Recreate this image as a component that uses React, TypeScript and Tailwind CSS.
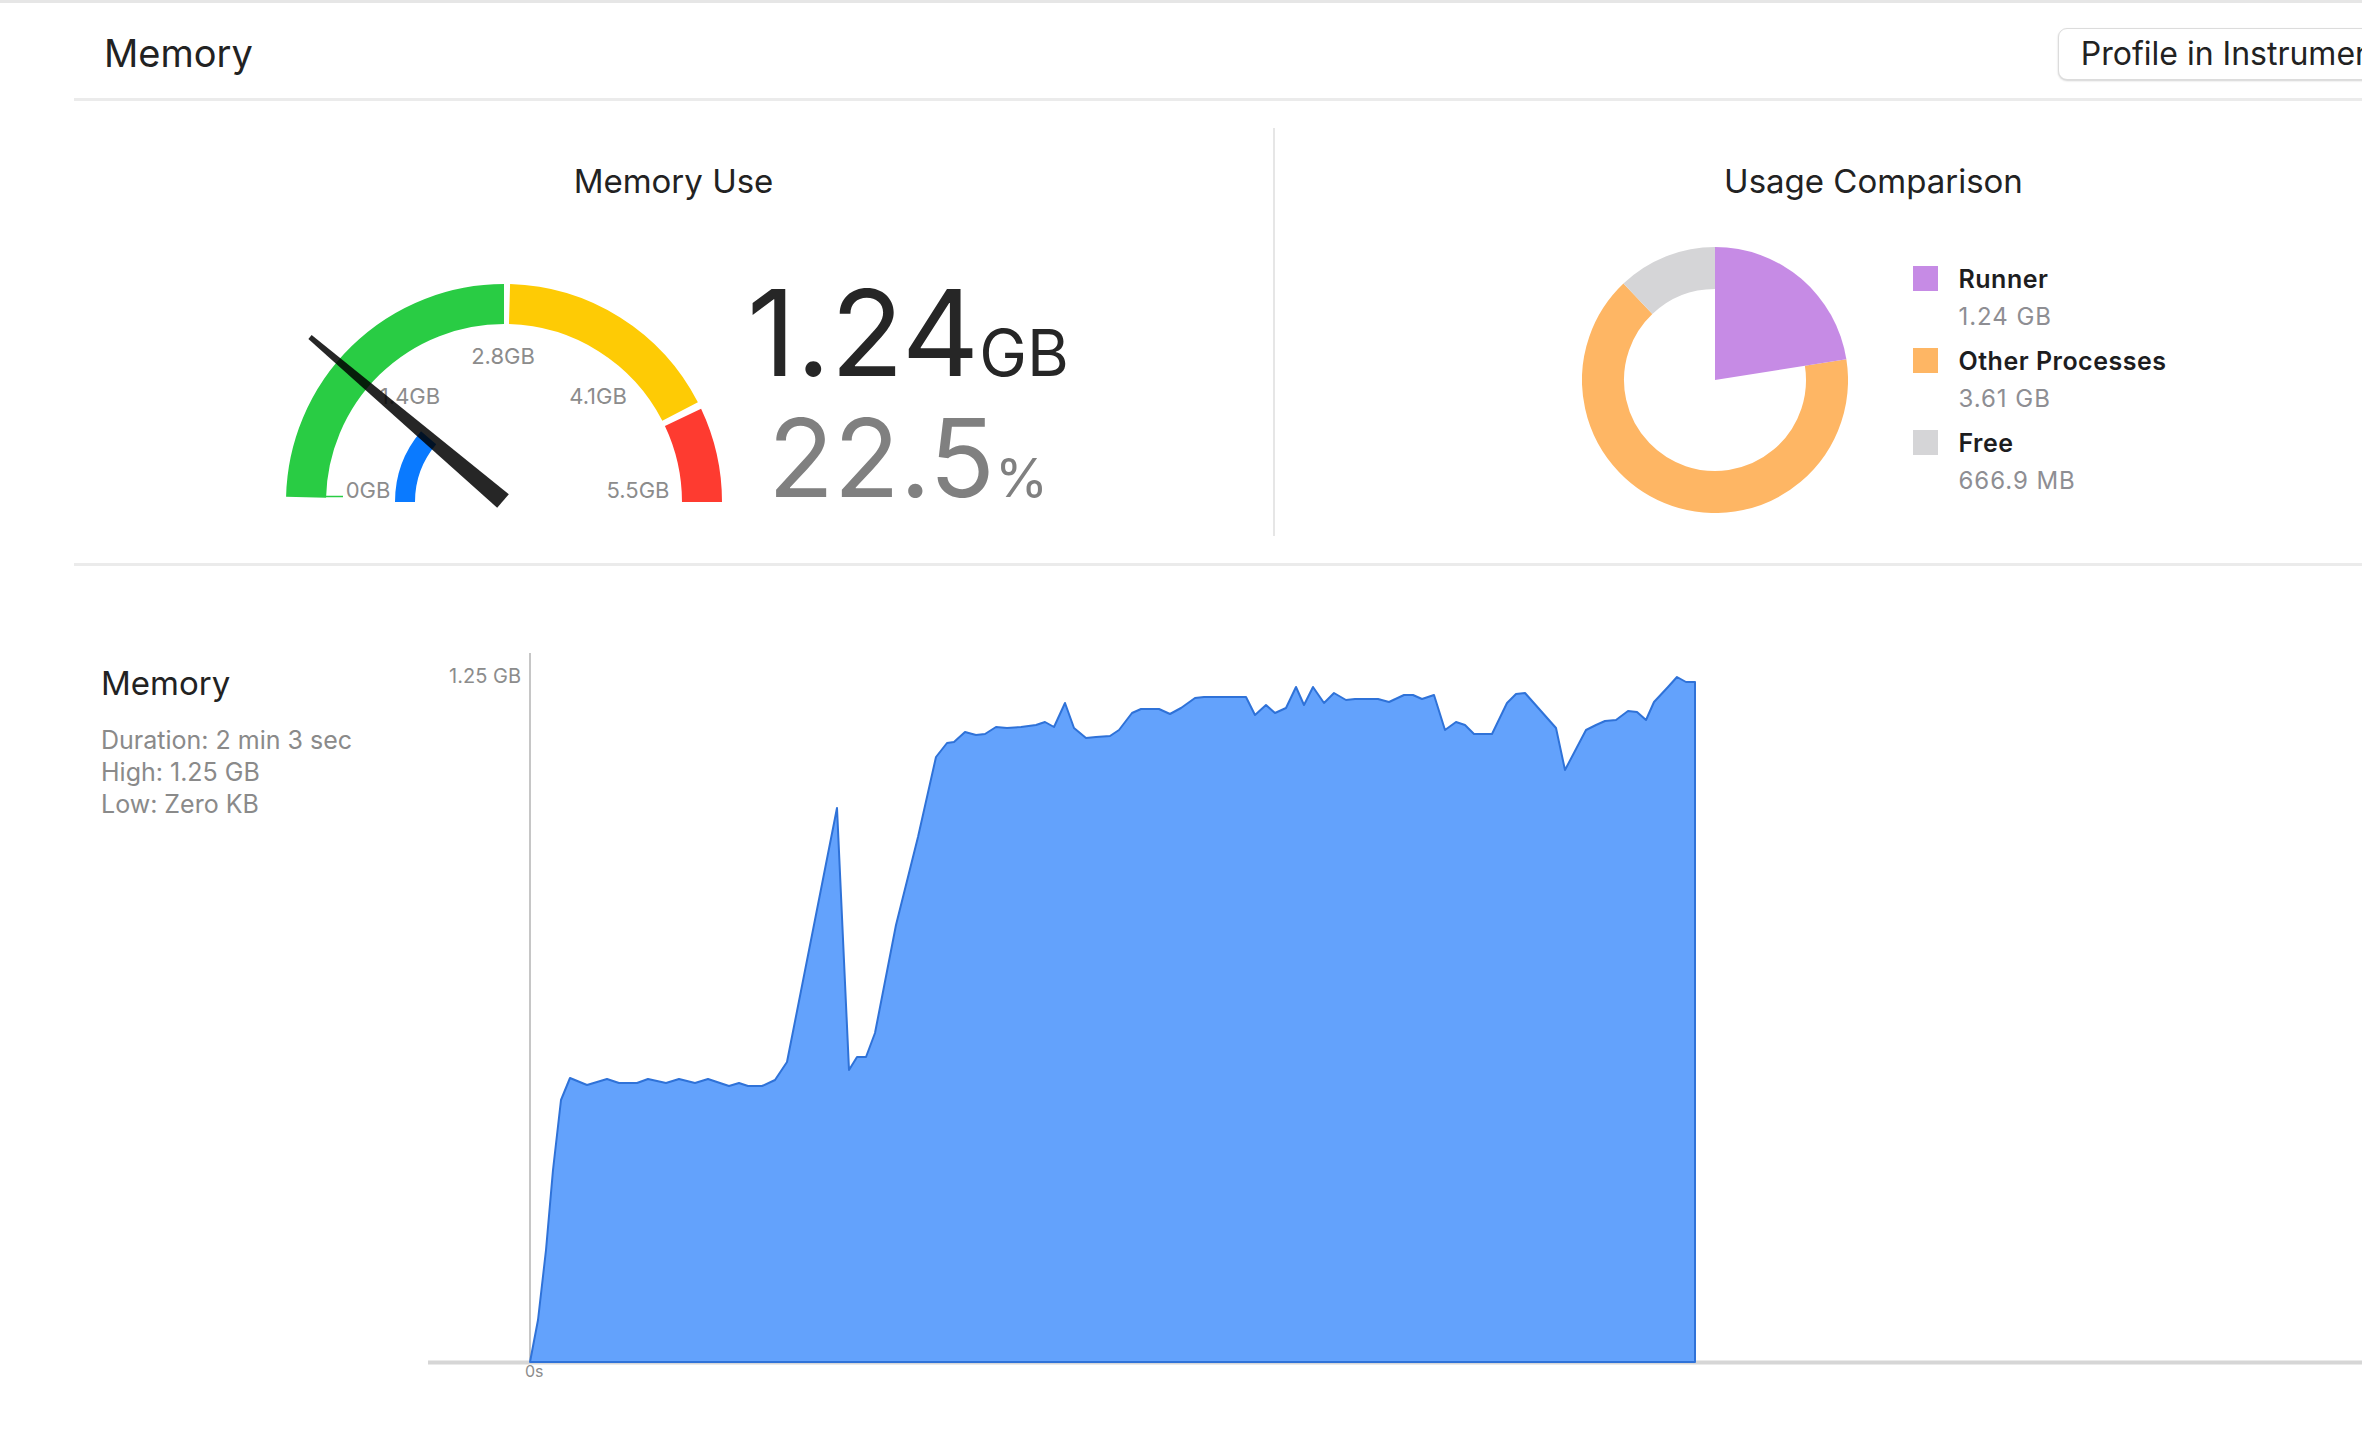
import React from "react";

type Point = [number, number];

// gauge geometry, in svg coords (svg sits at 280,270 on the page)
const GAUGE_CX = 226;
const GAUGE_CY = 230;

// chart svg sits at 428,566 on the page
const CHART_X = 428;
const CHART_Y = 566;

const MEMORY_SAMPLES: Point[] = [
  [530, 1362], [538, 1320], [546, 1250], [553, 1170], [561, 1100], [570, 1078],
  [587, 1085], [607, 1079], [619, 1083], [637, 1083], [648, 1079], [666, 1083],
  [679, 1079], [695, 1083], [708, 1079], [729, 1086], [739, 1083], [748, 1086],
  [762, 1086], [775, 1080], [787, 1062], [837, 808], [849, 1070], [857, 1057],
  [866, 1057], [875, 1033], [896, 925], [918, 837], [936, 757], [947, 743],
  [954, 742], [965, 732], [976, 735], [985, 734], [996, 727], [1007, 728],
  [1021, 727], [1036, 725], [1045, 722], [1054, 727], [1065, 703], [1074, 728],
  [1086, 738], [1096, 737], [1110, 736], [1119, 730], [1132, 713], [1141, 709],
  [1159, 709], [1170, 714], [1181, 708], [1195, 698], [1204, 697], [1246, 697],
  [1255, 715], [1266, 705], [1275, 713], [1286, 708], [1296, 687], [1304, 705],
  [1313, 687], [1324, 703], [1334, 693], [1346, 700], [1355, 699], [1378, 699],
  [1389, 702], [1404, 695], [1413, 695], [1422, 699], [1434, 695], [1445, 730],
  [1456, 722], [1465, 725], [1474, 734], [1492, 734], [1507, 703], [1516, 694],
  [1525, 693], [1556, 728], [1565, 770], [1586, 730], [1596, 725], [1605, 721],
  [1616, 720], [1628, 711], [1637, 712], [1646, 720], [1654, 702], [1668, 687],
  [1677, 677], [1686, 682], [1695, 682], [1695, 1362],
];

const LEGEND = [
  { label: "Runner", value: "1.24 GB", color: "bg-[#c68be5]" },
  { label: "Other Processes", value: "3.61 GB", color: "bg-[#feb664]" },
  { label: "Free", value: "666.9 MB", color: "bg-[#d5d5d7]" },
];

const polar = (cx: number, cy: number, r: number, deg: number): Point => {
  const rad = (deg * Math.PI) / 180;
  return [cx + r * Math.cos(rad), cy - r * Math.sin(rad)];
};

// clockwise arc from math angle `from` down to `to`
const arc = (cx: number, cy: number, r: number, from: number, to: number) => {
  const [x1, y1] = polar(cx, cy, r, from);
  const [x2, y2] = polar(cx, cy, r, to);
  const large = from - to > 180 ? 1 : 0;
  return `M ${x1} ${y1} A ${r} ${r} 0 ${large} 1 ${x2} ${y2}`;
};

// donut angles are measured clockwise from 12 o'clock
const ring = (cx: number, cy: number, r: number, from: number, to: number) => {
  const p = (a: number): Point => {
    const rad = (a * Math.PI) / 180;
    return [cx + r * Math.sin(rad), cy - r * Math.cos(rad)];
  };
  const [x1, y1] = p(from);
  const [x2, y2] = p(to);
  const large = to - from > 180 ? 1 : 0;
  return `M ${x1} ${y1} A ${r} ${r} 0 ${large} 1 ${x2} ${y2}`;
};

const Gauge = () => {
  const base: Point = [225, 229];
  const tip: Point = [32, 65];
  const dx = tip[0] - base[0];
  const dy = tip[1] - base[1];
  const len = Math.hypot(dx, dy);
  const nx = -dy / len;
  const ny = dx / len;
  const needle = [
    [base[0] + nx * 9, base[1] + ny * 9],
    [tip[0] + nx * 2.5, tip[1] + ny * 2.5],
    [tip[0] - nx * 2.5, tip[1] - ny * 2.5],
    [base[0] - nx * 9, base[1] - ny * 9],
  ]
    .map(([x, y]) => `${x},${y}`)
    .join(" ");

  const labels = [
    { text: "0GB", x: 90, y: 226 },
    { text: "1.4GB", x: 132, y: 132 },
    { text: "2.8GB", x: 225, y: 92 },
    { text: "4.1GB", x: 320, y: 132 },
    { text: "5.5GB", x: 360, y: 226 },
  ];

  return (
    <svg width={460} height={250} viewBox="0 0 460 250" className="shrink-0">
      <path d={arc(GAUGE_CX, GAUGE_CY, 198, 178.6, 90)} fill="none" stroke="#29cc44" strokeWidth={40} />
      <path d={arc(GAUGE_CX, GAUGE_CY, 198, 88.4, 27.2)} fill="none" stroke="#fecb05" strokeWidth={40} />
      <path d={arc(GAUGE_CX, GAUGE_CY, 198, 25.3, 0)} fill="none" stroke="#fe3b30" strokeWidth={40} />
      <line x1={48} y1={224.5} x2={65} y2={224.5} stroke="#29cc44" strokeWidth={1.5} />
      <path d={arc(GAUGE_CX, GAUGE_CY, 99, 180, 139.6)} fill="none" stroke="#0a7aff" strokeWidth={20} />
      {labels.map((l) => (
        <text
          key={l.text}
          x={l.x}
          y={l.y}
          textAnchor="middle"
          fontSize={22}
          fill="#8c8c8c"
          fontFamily="Inter, sans-serif"
        >
          {l.text}
        </text>
      ))}
      <polygon points={needle} fill="#000000" fillOpacity={0.85} />
    </svg>
  );
};

const Donut = () => (
  <svg width={266} height={266} viewBox="0 0 266 266" className="shrink-0">
    <path d={ring(133, 133, 112, 81, 316.5)} fill="none" stroke="#feb664" strokeWidth={42} />
    <path d={ring(133, 133, 112, 316.5, 360)} fill="none" stroke="#d5d5d7" strokeWidth={42} />
    <path
      d={`M 133 133 L 133 0 A 133 133 0 0 1 ${133 + 133 * Math.sin((81 * Math.PI) / 180)} ${
        133 - 133 * Math.cos((81 * Math.PI) / 180)
      } Z`}
      fill="#c68be5"
    />
  </svg>
);

const MemoryChart = () => {
  const d =
    MEMORY_SAMPLES.map(([x, y], i) => `${i === 0 ? "M" : "L"} ${x - CHART_X} ${y - CHART_Y}`).join(" ") + " Z";

  return (
    <svg width={2044} height={830} viewBox="0 0 2044 830" className="shrink-0">
      <line x1={102} y1={87} x2={102} y2={796} stroke="#c6c6c6" strokeWidth={2} />
      <line x1={0} y1={796.5} x2={2044} y2={796.5} stroke="#d6d6d6" strokeWidth={4} />
      <path d={d} fill="#63a2fc" stroke="#2f72d8" strokeWidth={2} strokeLinejoin="round" />
      <text x={93} y={117} textAnchor="end" fontSize={20} fill="#8c8c8c" fontFamily="Inter, sans-serif">
        1.25 GB
      </text>
      <text x={97} y={811} fontSize={16} fill="#8c8c8c" fontFamily="Inter, sans-serif">
        0s
      </text>
    </svg>
  );
};

export default function App() {
  return (
    <div className="h-[1440px] w-full overflow-hidden bg-white font-['Inter',sans-serif] text-[#1f1f1f]">
      <div className="h-[3px] bg-[#e6e6e6]" />

      <div className="ml-[74px] w-[2398px]">
        <header className="flex h-[98px] items-center justify-between border-b-[3px] border-[#ebebeb] pl-[30px] pr-[48px] pt-[6px]">
          <h1 className="text-[38px] font-normal text-[#222]">Memory</h1>
          <button className="h-[52px] rounded-[9px] border border-[#dcdcdc] bg-white px-[22px] text-[32px] text-[#222] shadow-[0_1px_2px_rgba(0,0,0,0.18)]">
            Profile in Instruments
          </button>
        </header>

        <div className="flex h-[465px] border-b-[3px] border-[#ebebeb]">
          <section className="w-[1199px] shrink-0 pt-[56px]">
            <h2 className="text-center text-[33px] text-[#222]">Memory Use</h2>
            <div className="mt-[65px] flex items-start justify-center gap-[9px]">
              <Gauge />
              <div className="flex w-[322px] flex-col items-center pt-[1px]">
                <div className="text-[120px] leading-none text-[#262626]">
                  1.24<span className="text-[64px]">GB</span>
                </div>
                <div className="mt-[11px] text-[108px] leading-none text-[#808080]">
                  22.5<span className="text-[54px]">%</span>
                </div>
              </div>
            </div>
          </section>

          <div className="my-[27px] w-[2px] shrink-0 bg-[#e6e6e6]" />

          <section className="w-[1197px] shrink-0 pt-[56px]">
            <h2 className="text-center text-[33px] text-[#222]">Usage Comparison</h2>
            <div className="mt-[40px] flex items-start justify-center gap-[65px]">
              <Donut />
              <div className="mt-[14px] flex w-[253px] flex-col gap-[6px]">
                {LEGEND.map((item) => (
                  <div key={item.label} className="flex">
                    <span className={`mt-[5px] h-[25px] w-[25px] shrink-0 ${item.color}`} />
                    <div className="ml-[21px] whitespace-nowrap">
                      <div className="h-[36px] text-[25px] font-semibold leading-[36px] tracking-[0.02em] text-[#1d1d1f]">
                        {item.label}
                      </div>
                      <div className="h-[40px] text-[24px] leading-[40px] tracking-[0.04em] text-[#8e8e93]">
                        {item.value}
                      </div>
                    </div>
                  </div>
                ))}
              </div>
            </div>
          </section>
        </div>

        <div className="flex">
          <div className="w-[354px] shrink-0 pl-[27px] pt-[93px]">
            <h2 className="text-[33px] text-[#222]">Memory</h2>
            <div className="mt-[15px] text-[25px] leading-[32px] text-[#8a8a8a]">
              <p>Duration: 2 min 3 sec</p>
              <p>High: 1.25 GB</p>
              <p>Low: Zero KB</p>
            </div>
          </div>
          <MemoryChart />
        </div>
      </div>
    </div>
  );
}
